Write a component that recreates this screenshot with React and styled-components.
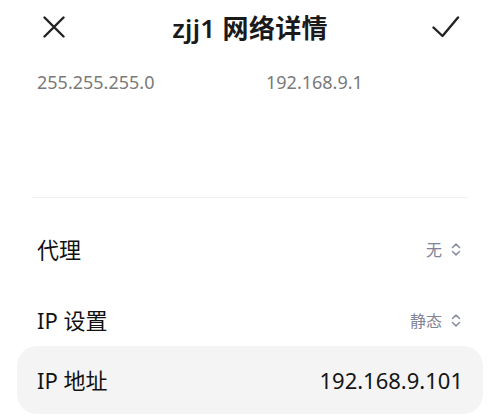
import React from "react";
import styled, { createGlobalStyle } from "styled-components";

const Global = createGlobalStyle`
  html, body { margin: 0; padding: 0; background: #ffffff; }
  body { font-family: "Noto Sans", "Noto Sans CJK SC", sans-serif; -webkit-font-smoothing: antialiased; }
`;

const Page = styled.div`
  width: 500px;
  height: 417px;
  overflow: hidden;
  background: #ffffff;
  display: flex;
  flex-direction: column;
`;

const Header = styled.div`
  height: 54px;
  display: grid;
  grid-template-columns: 1fr auto 1fr;
  align-items: center;
  padding: 0 40px 0 40px;
`;

const IconButton = styled.div`
  width: 28px;
  height: 28px;
  display: flex;
  align-items: center;
  justify-content: center;
  color: #222;
  justify-self: ${(p) => (p.$end ? "end" : "start")};
`;

const Title = styled.div`
  font-size: 26px;
  font-weight: 600;
  color: #1a1a1a;
  letter-spacing: 0.3px;
`;

const InfoGrid = styled.div`
  margin-top: 16px;
  display: grid;
  grid-template-columns: 229px 1fr;
  padding-left: 37px;
  height: 24px;
  align-items: center;
`;

const InfoText = styled.div`
  font-size: 18px;
  color: #7a7a7a;
  line-height: 24px;
`;

const Divider = styled.div`
  margin: 103px 32px 0;
  height: 1px;
  background: #f1f1f1;
`;

const Rows = styled.div`
  margin-top: 27px;
  display: flex;
  flex-direction: column;
  gap: 23px;
`;

const Row = styled.div`
  height: 48px;
  display: flex;
  align-items: center;
  justify-content: space-between;
  padding: 0 39px 0 37px;
`;

const Label = styled.div`
  font-size: 22px;
  color: #111;
  line-height: 30px;
`;

const Select = styled.div`
  display: flex;
  align-items: center;
  gap: 9px;
  font-size: 16px;
  color: #7f8498;
`;

const Field = styled.div`
  margin: 2px 17px 0;
  height: 68px;
  border-radius: 20px;
  background: #f4f4f4;
  display: flex;
  align-items: center;
  justify-content: space-between;
  padding: 0 20px;
`;

const Value = styled.div`
  font-size: 22px;
  color: #151515;
  line-height: 30px;
`;

const CloseIcon = () => (
  <svg width="22" height="22" viewBox="0 0 22 22" fill="none" stroke="currentColor" strokeWidth="2.4" strokeLinecap="round">
    <path d="M1.5 1.5 L20.5 20.5 M20.5 1.5 L1.5 20.5" />
  </svg>
);

const CheckIcon = () => (
  <svg width="28" height="22" viewBox="0 0 28 22" fill="none" stroke="currentColor" strokeWidth="2.4" strokeLinecap="round" strokeLinejoin="round">
    <path d="M1.5 11.5 L10.5 20 L26 1.5" />
  </svg>
);

const UpDown = () => (
  <svg width="10" height="13" viewBox="0 0 10 13" fill="none" stroke="#8a8fa3" strokeWidth="1.6" strokeLinecap="round" strokeLinejoin="round">
    <path d="M1.5 4.5 L5 1.2 L8.5 4.5 M1.5 8.5 L5 11.8 L8.5 8.5" />
  </svg>
);

export default function App() {
  return (
    <Page>
      <Global />
      <Header>
        <IconButton><CloseIcon /></IconButton>
        <Title>zjj1 网络详情</Title>
        <IconButton $end><CheckIcon /></IconButton>
      </Header>
      <InfoGrid>
        <InfoText>255.255.255.0</InfoText>
        <InfoText>192.168.9.1</InfoText>
      </InfoGrid>
      <Divider />
      <Rows>
        <Row>
          <Label>代理</Label>
          <Select>无<UpDown /></Select>
        </Row>
        <Row>
          <Label>IP 设置</Label>
          <Select>静态<UpDown /></Select>
        </Row>
      </Rows>
      <Field>
        <Label>IP 地址</Label>
        <Value>192.168.9.101</Value>
      </Field>
    </Page>
  );
}
